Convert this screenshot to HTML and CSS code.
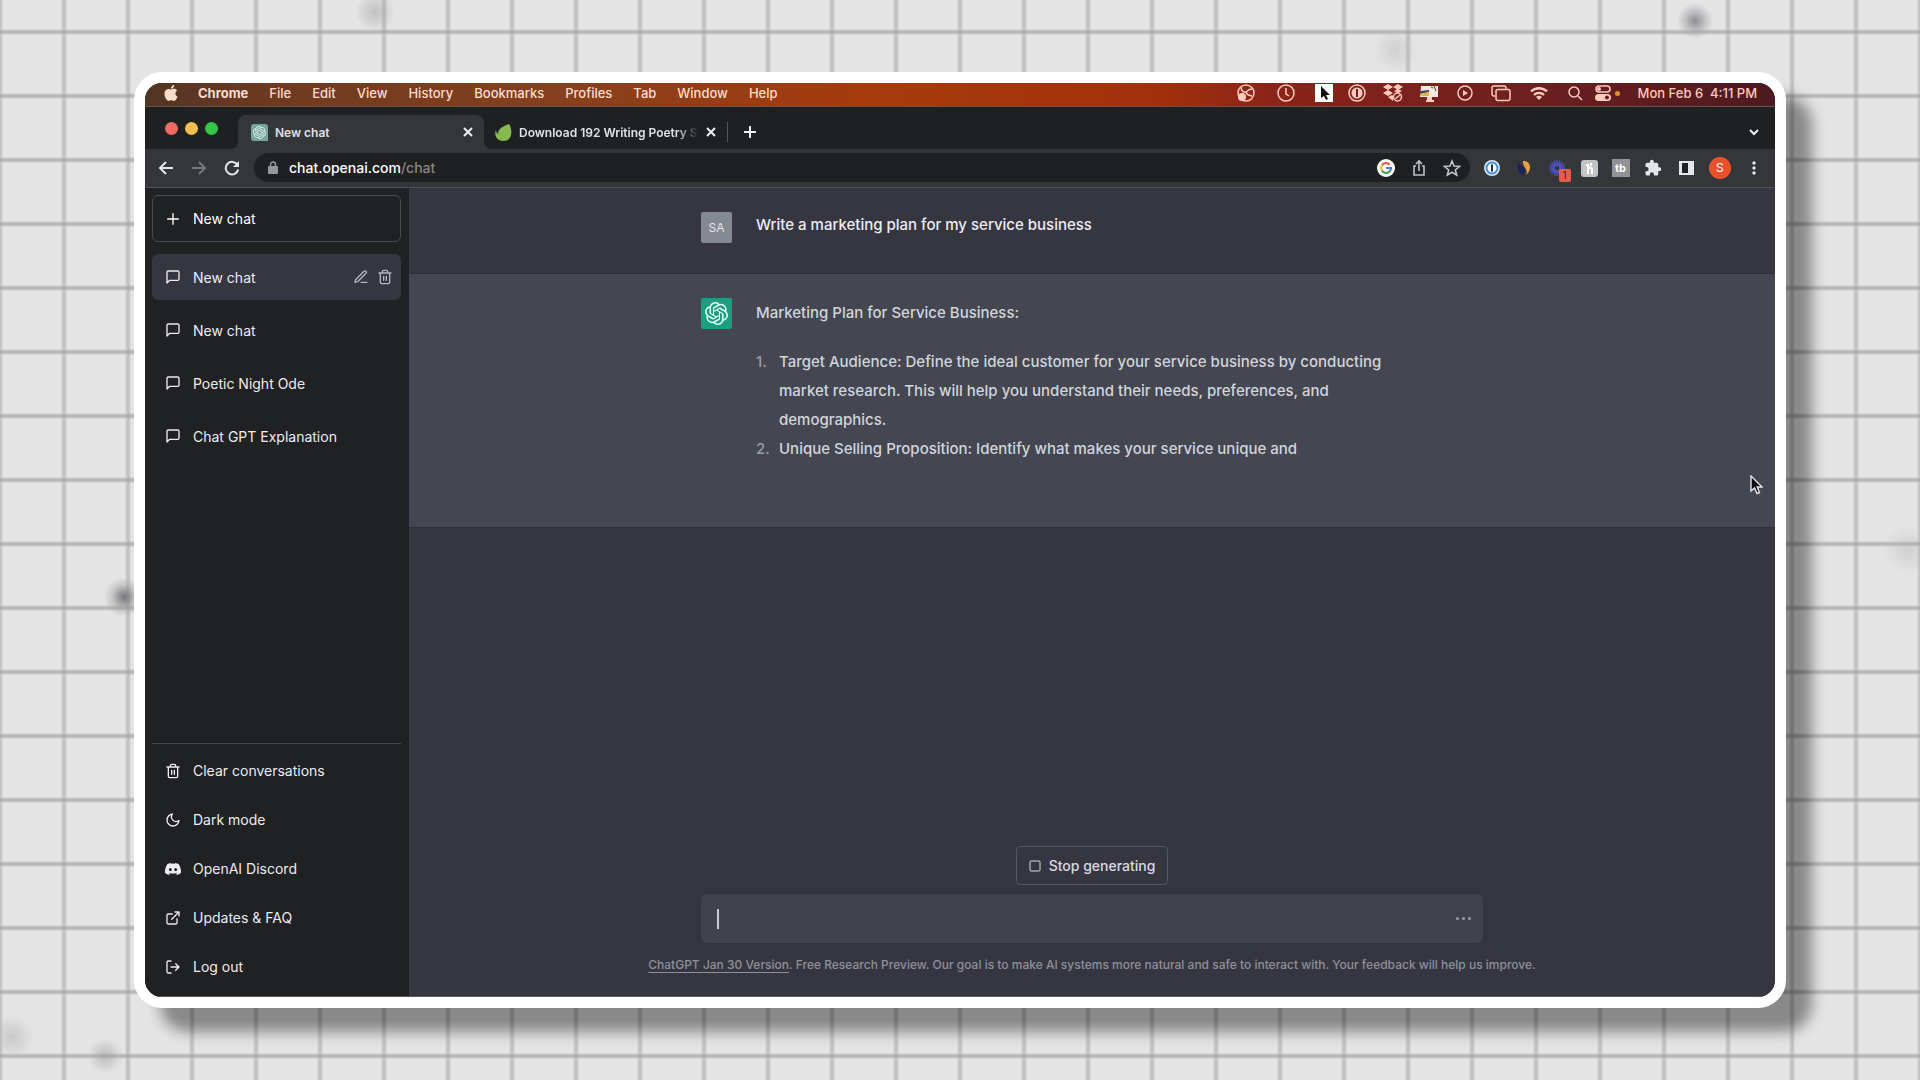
FILE: index.html
```html
<!DOCTYPE html>
<html lang="en">
<head>
    <meta charset="UTF-8">
    <meta name="viewport" content="width=device-width, initial-scale=1.0">
    <title>New chat</title>
    <link rel="stylesheet" href="styles.css">
</head>
<body>
    <!-- shared icons -->
    <svg class="sprite" aria-hidden="true">
        <symbol id="chat" viewBox="0 0 24 24"><path d="M21 15a2 2 0 0 1-2 2H7l-4 4V5a2 2 0 0 1 2-2h14a2 2 0 0 1 2 2z"/></symbol>
        <symbol id="trash" viewBox="0 0 24 24"><path d="M3 6h18M19 6v14a2 2 0 0 1-2 2H7a2 2 0 0 1-2-2V6m3 0V4a2 2 0 0 1 2-2h4a2 2 0 0 1 2 2v2M10 11v6M14 11v6"/></symbol>
        <symbol id="openai" viewBox="0 0 24 24"><path d="M22.2819 9.8211a5.9847 5.9847 0 0 0-.5157-4.9108 6.0462 6.0462 0 0 0-6.5098-2.9A6.0651 6.0651 0 0 0 4.9807 4.1818a5.9847 5.9847 0 0 0-3.9977 2.9 6.0462 6.0462 0 0 0 .7427 7.0966 5.98 5.98 0 0 0 .511 4.9107 6.051 6.051 0 0 0 6.5146 2.9001A5.9847 5.9847 0 0 0 13.2599 24a6.0557 6.0557 0 0 0 5.7718-4.2058 5.9894 5.9894 0 0 0 3.9977-2.9001 6.0557 6.0557 0 0 0-.7475-7.0729zm-9.022 12.6081a4.4755 4.4755 0 0 1-2.8764-1.0408l.1419-.0804 4.7783-2.7582a.7948.7948 0 0 0 .3927-.6813v-6.7369l2.02 1.1686a.071.071 0 0 1 .038.052v5.5826a4.504 4.504 0 0 1-4.4945 4.4944zm-9.6607-4.1254a4.4708 4.4708 0 0 1-.5346-3.0137l.142.0852 4.783 2.7582a.7712.7712 0 0 0 .7806 0l5.8428-3.3685v2.3324a.0804.0804 0 0 1-.0332.0615L9.74 19.9502a4.4992 4.4992 0 0 1-6.1408-1.6464zM2.3408 7.8956a4.485 4.485 0 0 1 2.3655-1.9728V11.6a.7664.7664 0 0 0 .3879.6765l5.8144 3.3543-2.0201 1.1685a.0757.0757 0 0 1-.071 0l-4.8303-2.7865A4.504 4.504 0 0 1 2.3408 7.872zm16.5963 3.8558L13.1038 8.364 15.1192 7.2a.0757.0757 0 0 1 .071 0l4.8303 2.7913a4.4944 4.4944 0 0 1-.6765 8.1042v-5.6772a.79.79 0 0 0-.407-.667zm2.0107-3.0231l-.142-.0852-4.7735-2.7818a.7759.7759 0 0 0-.7854 0L9.409 9.2297V6.8974a.0662.0662 0 0 1 .0284-.0615l4.8303-2.7866a4.4992 4.4992 0 0 1 6.6802 4.66zM8.3065 12.863l-2.02-1.1638a.0804.0804 0 0 1-.038-.0567V6.0742a4.4992 4.4992 0 0 1 7.3757-3.4537l-.142.0805L8.704 5.459a.7948.7948 0 0 0-.3927.6813zm1.0976-2.3654l2.602-1.4998 2.6069 1.4998v2.9994l-2.5974 1.4997-2.6067-1.4997Z"/></symbol>
    </svg>

    <div class="screen">
        <header class="menubar">
            <svg class="apple" viewBox="0 0 24 24"><path d="M12.152 6.896c-.948 0-2.415-1.078-3.96-1.04-2.04.027-3.91 1.183-4.961 3.014-2.117 3.675-.546 9.103 1.519 12.09 1.013 1.454 2.208 3.09 3.792 3.039 1.52-.065 2.09-.987 3.935-.987 1.831 0 2.35.987 3.96.948 1.637-.026 2.676-1.48 3.676-2.948 1.156-1.688 1.636-3.325 1.662-3.415-.039-.013-3.182-1.221-3.22-4.857-.026-3.04 2.48-4.494 2.597-4.559-1.429-2.09-3.623-2.324-4.39-2.376-2-.156-3.675 1.09-4.61 1.09zM15.53 3.83c.843-1.012 1.4-2.427 1.245-3.83-1.207.052-2.662.805-3.532 1.818-.78.896-1.454 2.338-1.273 3.714 1.338.104 2.715-.688 3.559-1.701"/></svg>
            <nav class="menus">
                <button class="app-name">Chrome</button>
                <button>File</button>
                <button>Edit</button>
                <button>View</button>
                <button>History</button>
                <button>Bookmarks</button>
                <button>Profiles</button>
                <button>Tab</button>
                <button>Window</button>
                <button>Help</button>
            </nav>
            <div class="status">
                <svg class="loose" viewBox="0 0 20 20"><circle cx="10" cy="10" r="8" class="line"/><path class="line" d="M5 4c0 4 3 6 5 5 2-1 2-3 6-3M10 9c1 4 4 3 6 4"/><circle cx="6" cy="14" r="4"/></svg>
                <svg class="wide" viewBox="0 0 20 20"><circle cx="10" cy="10" r="8" class="line"/><path class="line" d="M10 5v6l3 2"/></svg>
                <svg class="tight" viewBox="0 0 20 20"><path fill="#fff" d="M1 1h18v18H1z"/><path fill="#111" d="M7 3v12l3-2 2 4 2-1-2-4h4z"/></svg>
                <svg viewBox="0 0 20 20"><circle cx="10" cy="10" r="8" class="line"/><circle cx="10" cy="10" r="5.500"/><path fill="#7b221c" d="M9 6h2v8H9z"/></svg>
                <svg viewBox="0 0 20 20"><path d="M5 1l5 3-5 3-5-3zM15 1l5 3-5 3-5-3zM5 7l5 3-5 3-5-3zM15 6l4 2-4 2-4-2zM5 14l4-2 1 1v5z"/><circle cx="14.500" cy="14" r="4" class="line"/><path class="line" d="M12 16l5-4"/></svg>
                <svg viewBox="0 0 20 20"><path fill="#f6e7dc" d="M2 3h17v11H1z"/><path fill="#3a4a63" d="M1 8l9-1v2l-9 2z"/><path fill="#e3b64a" d="M1 11l9-2v4H1z"/><path d="M8 14h5v3h2v2H7v-2h1z"/><path stroke="#4a2b2b" d="M15 3l2 5M12 4l2 1"/></svg>
                <svg viewBox="0 0 20 20"><circle cx="10" cy="10" r="7" class="line"/><path d="M8 7l5 3-5 3z"/></svg>
                <svg class="wide" viewBox="0 0 20 20"><path class="line" d="M4 13H3a2 2 0 0 1-2-2V5a2 2 0 0 1 2-2h10a2 2 0 0 1 2 2v1"/><rect x="5" y="6.500" width="14" height="11" rx="2" class="line"/></svg>
                <svg viewBox="0 0 20 20"><path class="wave" d="M2 8.500a11.500 11.500 0 0 1 16 0M5 12a7 7 0 0 1 10 0"/><path d="M10 17l-3-3a4 4 0 0 1 6 0z"/></svg>
                <svg class="search" viewBox="0 0 20 20"><circle cx="9" cy="9" r="5" class="line"/><path class="line" d="M13 13l4 4"/></svg>
                <svg class="control" viewBox="0 0 20 20"><rect x="3" y="3" width="14" height="6" rx="3" class="line"/><circle cx="6" cy="6" r="2"/><rect x="2" y="11" width="16" height="7" rx="3.500"/><circle cx="14" cy="14.500" r="2" fill="#5f1d22"/></svg>
                <span class="dot"></span>
                <time>Mon Feb 6&nbsp; 4:11 PM</time>
            </div>
        </header>

        <div class="browser">
            <div class="tabstrip">
                <div class="lights"><span class="red"></span><span class="yellow"></span><span class="green"></span></div>
                <div class="tab active">
                    <svg class="favicon gpt" viewBox="0 0 17 17"><path fill="#74a69c" d="M3 0h11a3 3 0 0 1 3 3v14H3a3 3 0 0 1-3-3V3a3 3 0 0 1 3-3z"/><use href="#openai" x="2" y="2" width="13" height="13"/></svg>
                    <span class="tab-title">New chat</span>
                    <button class="close" aria-label="Close tab"><svg viewBox="0 0 10 10"><path d="M1 1l8 8M9 1l-8 8"/></svg></button>
                </div>
                <div class="tab">
                    <svg class="favicon" viewBox="0 0 17 17"><path fill="#87b94f" d="M14 0c3 4 5 17-6 17C1 17-1 10 1 6c0 2 1 3 2 4C3 4 9 2 14 0z"/></svg>
                    <span class="tab-title faded">Download 192 Writing Poetry S</span>
                    <button class="close" aria-label="Close tab"><svg viewBox="0 0 10 10"><path d="M1 1l8 8M9 1l-8 8"/></svg></button>
                </div>
                <button class="new-tab" aria-label="New tab"><svg viewBox="0 0 12 12"><path d="M6 0v12M0 6h12"/></svg></button>
                <button class="tab-search" aria-label="Search tabs"><svg viewBox="0 0 12 12"><path d="M2 4l4 4 4-4"/></svg></button>
            </div>

            <div class="toolbar">
                <div class="nav">
                    <button aria-label="Back"><svg viewBox="0 0 16 16"><path d="M15 8H2M8 2L2 8l6 6"/></svg></button>
                    <button class="off" aria-label="Forward"><svg viewBox="0 0 16 16"><path d="M1 8h13M8 2l6 6-6 6"/></svg></button>
                    <button aria-label="Reload"><svg viewBox="0 0 16 16"><path d="M13.500 5A6.300 6.300 0 1 0 14.200 9.500"/><path class="solid" d="M15 1v6H9z"/></svg></button>
                </div>
                <div class="omnibox">
                    <svg class="lock" viewBox="0 0 10 13"><rect y="5" width="10" height="8" rx="1"/><path class="shackle" d="M2.500 6V3.500a2.500 2.500 0 0 1 5 0V6"/></svg>
                    <a class="url" href="#">chat.openai.com<span>/chat</span></a>
                    <div class="omni-actions">
                        <svg viewBox="0 0 18 18"><circle cx="9" cy="9" r="9" fill="#fff"/><g fill="none" stroke-width="2.200"><path stroke="#e35b4d" d="M4.800 6.500A5 5 0 0 1 12.600 5.600"/><path stroke="#f1bd42" d="M4.800 11.500a5 5 0 0 1 0-5"/><path stroke="#4aa35a" d="M12.500 12.600a5 5 0 0 1-7.700-1.100"/><path stroke="#4b7fe0" d="M9 9h5a5 5 0 0 1-1.500 3.600"/></g></svg>
                        <svg class="outline" viewBox="0 0 18 18"><path d="M6 7H4v9h10V7h-2M9 12V2M6 5l3-3 3 3"/></svg>
                        <svg class="outline" viewBox="0 0 18 18"><path d="M9 2l2 5 5.500.500-4.200 3.500L13.700 16 9 13.200 4.300 16l1.400-5L1.500 7.500 7 7z"/></svg>
                    </div>
                </div>
                <div class="extensions">
                    <svg viewBox="0 0 18 18"><circle cx="9" cy="9" r="8" fill="#d9e8f5"/><circle cx="9" cy="9" r="5.500" fill="#f3f8fc" stroke="#4a8ec8" stroke-width="2"/><path fill="#14304b" d="M8 5.500h2v7H8z"/></svg>
                    <svg viewBox="0 0 18 18"><path fill="#1f2450" d="M4 3c0 4 6 4 6 8 0 2-1 4-2 5-5-1-7-8-4-13z"/><path fill="#e8a33a" d="M8 2c7-1 10 8 3 14 3-6-4-8-3-14z"/></svg>
                    <div class="ext-badged">
                        <svg viewBox="0 0 18 18"><path stroke="#5350c4" stroke-width="1.500" d="M9 1v6M9 11v6M1 9h6M11 9h6M3.300 3.300l4.200 4.200M10.500 10.500l4.200 4.200M14.700 3.300l-4.200 4.200M7.500 10.500l-4.200 4.200M6 1.600l2 5M10 11.500l2 5M12 1.600l-2 5M8 11.500l-2 5M1.600 6l5 2M11.500 10l5 2M16.400 6l-5 2M6.500 10l-5 2"/></svg>
                        <span class="badge">1</span>
                    </div>
                    <svg viewBox="0 0 18 18"><rect x="1" y="1" width="17" height="17" rx="3" fill="#c3c4c6"/><path fill="none" stroke="#fff" stroke-width="2" d="M6 6h2v9M8 11c0-3 4-3 4 0v4M11 4v3"/></svg>
                    <svg viewBox="0 0 18 18"><path fill="#909295" d="M0 0h18v18H0z"/><text x="3" y="13" class="tb">tb</text></svg>
                    <svg viewBox="0 0 24 24"><path fill="#e4e6ea" d="M20.500 11H19V7a2 2 0 0 0-2-2h-4V3.500a2.500 2.500 0 0 0-5 0V5H4a2 2 0 0 0-2 2v3.800h1.500a2.700 2.700 0 0 1 0 5.400H2V20a2 2 0 0 0 2 2h3.800v-1.500a2.700 2.700 0 0 1 5.400 0V22H17a2 2 0 0 0 2-2v-4h1.500a2.500 2.500 0 0 0 0-5z"/></svg>
                    <svg viewBox="0 0 18 18"><path fill="#e4e6ea" d="M2 2h15v14H2z"/><path fill="#202124" d="M5 4h6v10H5z"/></svg>
                    <button class="profile">S</button>
                    <svg viewBox="0 0 18 18"><g fill="#e4e6ea"><circle cx="9" cy="4" r="1.700"/><circle cx="9" cy="9" r="1.700"/><circle cx="9" cy="14" r="1.700"/></g></svg>
                </div>
            </div>

            <div class="page">
                <aside class="sidebar">
                    <button class="new-chat"><svg viewBox="0 0 24 24"><path d="M12 4v16M4 12h16"/></svg>New chat</button>
                    <nav class="history">
                        <div class="row current">
                            <a href="#"><svg><use href="#chat"/></svg>New chat</a>
                            <button aria-label="Rename"><svg viewBox="0 0 24 24"><path d="M12 20h9M16.500 3.500a2.100 2.100 0 0 1 3 3L7 19l-4 1 1-4z"/></svg></button>
                            <button aria-label="Delete"><svg><use href="#trash"/></svg></button>
                        </div>
                        <div class="row"><a href="#"><svg><use href="#chat"/></svg>New chat</a></div>
                        <div class="row"><a href="#"><svg><use href="#chat"/></svg>Poetic Night Ode</a></div>
                        <div class="row"><a href="#"><svg><use href="#chat"/></svg>Chat GPT Explanation</a></div>
                    </nav>
                    <nav class="links">
                        <a href="#"><svg><use href="#trash"/></svg>Clear conversations</a>
                        <a href="#"><svg viewBox="0 0 24 24"><path d="M21 12.800A9 9 0 1 1 11.200 3a7 7 0 0 0 9.800 9.800z"/></svg>Dark mode</a>
                        <a href="#"><svg class="discord" viewBox="0 0 24 24"><path d="M20.317 4.370a19.800 19.800 0 0 0-4.885-1.515l-.687 1.287a18.300 18.300 0 0 0-5.487 0L8.562 2.855a19.700 19.700 0 0 0-4.885 1.515C.533 9.046-.319 13.580.099 18.058c2.053 1.508 4.041 2.423 6.024 3.086l1.310-2.022-1.914-.998.442-.547c3.928 1.793 8.180 1.793 12.061 0l.449.547-1.914.998 1.309 2.022c1.961-.607 3.950-1.522 6.034-3.086.500-5.177-.838-9.674-3.583-13.688zM8.020 15.331c-1.183 0-2.157-1.086-2.157-2.419s.956-2.419 2.157-2.419c1.211 0 2.176 1.095 2.157 2.419 0 1.333-.956 2.419-2.157 2.419zm7.975 0c-1.183 0-2.157-1.086-2.157-2.419s.955-2.419 2.157-2.419c1.211 0 2.176 1.095 2.157 2.419 0 1.333-.946 2.419-2.157 2.419z"/></svg>OpenAI Discord</a>
                        <a href="#"><svg viewBox="0 0 24 24"><path d="M18 13v6a2 2 0 0 1-2 2H5a2 2 0 0 1-2-2V8a2 2 0 0 1 2-2h6M15 3h6v6M10 14L21 3"/></svg>Updates &amp; FAQ</a>
                        <a href="#"><svg viewBox="0 0 24 24"><path d="M9 21H5a2 2 0 0 1-2-2V5a2 2 0 0 1 2-2h4M16 17l5-5-5-5M21 12H9"/></svg>Log out</a>
                    </nav>
                </aside>

                <main class="chat">
                    <section class="message user">
                        <div class="inner">
                            <div class="avatar">SA</div>
                            <div class="text"><p>Write a marketing plan for my service business</p></div>
                        </div>
                    </section>
                    <section class="message assistant">
                        <div class="inner">
                            <div class="avatar bot"><svg><use href="#openai"/></svg></div>
                            <div class="text">
                                <p>Marketing Plan for Service Business:</p>
                                <ol>
                                    <li>Target Audience: Define the ideal customer for your service business by conducting market research. This will help you understand their needs, preferences, and demographics.</li>
                                    <li>Unique Selling Proposition: Identify what makes your service unique and</li>
                                </ol>
                            </div>
                        </div>
                    </section>
                    <footer class="composer">
                        <button class="stop"><svg viewBox="0 0 12 12"><rect x="1" y="1" width="10" height="10" rx="1"/></svg>Stop generating</button>
                        <form class="prompt">
                            <span class="caret"></span>
                            <input type="text" aria-label="Message">
                            <span class="dots"><i></i><i></i><i></i></span>
                        </form>
                        <p class="note"><a href="#">ChatGPT Jan 30 Version</a>. Free Research Preview. Our goal is to make AI systems more natural and safe to interact with. Your feedback will help us improve.</p>
                    </footer>
                    <svg class="pointer" viewBox="0 0 13 20"><path d="M1 1v15l3.500-3 2.500 5.500 2.500-1L7.200 12H12z"/></svg>
                </main>
            </div>
        </div>
    </div>
</body>
</html>
```
FILE: styles.css
```css
* {
    box-sizing: border-box;
}
body {
    margin: 0;
    min-height: 100vh;
    padding: 72px 134px;
    font-family: Inter, "Liberation Sans", sans-serif;
    font-size: 14px;
    background-color: #e4e4e4;
    /* ink blots over a 64px paper grid */
    background-image:
        radial-gradient(circle at 1695px 21px, #8d8d94 0, #a5a5aa88 10px, transparent 18px),
        radial-gradient(circle at 124px 597px, #77777c 0, #99999966 12px, transparent 20px),
        radial-gradient(circle at 375px 12px, #9997 0, transparent 20px),
        radial-gradient(circle at 105px 1056px, #9998 0, transparent 18px),
        radial-gradient(circle at 12px 1037px, #aaa7 0, transparent 22px),
        radial-gradient(circle at 1908px 550px, #aaa5 0, transparent 24px),
        radial-gradient(circle at 1395px 50px, #aaa5 0, transparent 22px),
        linear-gradient(90deg, transparent 29px, #9997 31px, #9997 33px, transparent 35px),
        linear-gradient(transparent 29px, #8887 31px, #8887 33px, transparent 35px);
    background-position: 0 0, 0 0, 0 0, 0 0, 0 0, 0 0, 0 0, 32px 0, 0 0;
    background-size: auto, auto, auto, auto, auto, auto, auto, 64px 64px, 64px 64px;
}
button {
    display: flex;
    align-items: center;
    padding: 0;
    border: 0;
    background: none;
    color: inherit;
    font: inherit;
}
a {
    color: inherit;
    text-decoration: none;
}
p {
    margin: 0;
}
svg {
    display: block;
    flex: none;
}
.sprite {
    position: absolute;
    width: 0;
    height: 0;
}
.screen {
    display: flex;
    flex-direction: column;
    min-height: calc(100vh - 144px);
    border: 11px solid #fff;
    border-radius: 28px;
    background: #1f2022;
    overflow: hidden;
    box-shadow: 26px 24px 14px rgba(0, 0, 0, 0.4);
}

/* mac menu bar */
.menubar {
    display: flex;
    align-items: center;
    height: 24px;
    padding: 0 18px 3px;
    color: #fbdcc8;
    font-size: 13px;
    font-weight: 500;
    border-bottom: 1px solid #6b5248;
    background: linear-gradient(90deg, #513425, #6f3a20 8%, #84401e 25%, #a83a0c 45%, #a3300b 62%, #8a2418 69%, #70201f 83%, #4c1a21);
}
.apple {
    width: 16px;
    height: 16px;
    margin-right: 19px;
    fill: currentColor;
}
.menus {
    display: flex;
    gap: 21px;
}
.app-name {
    font-weight: 700;
}
.status {
    display: flex;
    align-items: center;
    margin-left: auto;
    color: #ffc9bd;
}
.status svg {
    width: 20px;
    height: 20px;
    margin-right: 16px;
    fill: currentColor;
}
.status .loose {
    margin-right: 20px;
}
.status .wide {
    margin-right: 18px;
}
.status .tight {
    margin-right: 13px;
}
.status .search {
    margin-right: 8px;
}
.status .control {
    margin-right: 2px;
}
.status .line, .status .wave {
    fill: none;
    stroke: currentColor;
    stroke-width: 1.5;
}
.status .wave {
    stroke-width: 2.4;
}
.dot {
    width: 5px;
    height: 5px;
    margin-right: 18px;
    border-radius: 50%;
    background: #e09035;
}

/* browser chrome */
.browser {
    display: flex;
    flex-direction: column;
    flex: 1;
    border-bottom: 1px solid #5b5c60;
}
.tabstrip {
    display: flex;
    align-items: center;
    height: 42px;
    padding: 8px 15px 0 20px;
    color: #dfe1e5;
    font-size: 12px;
    font-weight: 600;
}
.lights {
    display: flex;
    gap: 7px;
    margin: 0 20px 8px 0;
}
.lights span {
    width: 13px;
    height: 13px;
    border-radius: 50%;
}
.lights .red {
    background: #ee6a63;
}
.lights .yellow {
    background: #f4bd4f;
}
.lights .green {
    background: #35c649;
}
.tab {
    display: flex;
    align-items: center;
    width: 243px;
    height: 34px;
    padding: 0 11px;
}
.tab.active {
    position: relative;
    width: 246px;
    padding: 0 11px 0 13px;
    border-radius: 8px 8px 0 0;
    background: #35363a;
}
/* flared feet of the open tab */
.tab.active::before, .tab.active::after {
    content: "";
    position: absolute;
    bottom: 0;
    left: -8px;
    width: 8px;
    height: 8px;
    background: radial-gradient(circle at 0 0, transparent 8px, #35363a 8px);
}
.tab.active::after {
    left: 100%;
    background: radial-gradient(circle at 100% 0, transparent 8px, #35363a 8px);
}
.favicon {
    width: 17px;
    height: 17px;
    margin-right: 7px;
}
.favicon.gpt {
    fill: #e2f0ec;
}
.tab-title {
    flex: 1;
    white-space: nowrap;
}
.faded {
    -webkit-mask-image: linear-gradient(90deg, #000 88%, transparent);
    mask-image: linear-gradient(90deg, #000 88%, transparent);
}
.close svg, .new-tab svg, .tab-search svg {
    width: 10px;
    height: 10px;
    fill: none;
    stroke: #eceef0;
    stroke-width: 2;
}
.close {
    margin-left: 8px;
}
.new-tab {
    height: 20px;
    padding-left: 16px;
    border-left: 1px solid #55565a;
}
.new-tab svg, .tab-search svg {
    width: 12px;
    height: 12px;
}
.tab-search {
    margin-left: auto;
}
.toolbar {
    display: flex;
    align-items: center;
    height: 39px;
    padding: 0 12px 1px 13px;
    border-bottom: 1px solid #505155;
    background: #35363a;
    color: #e4e6ea;
}
.nav {
    display: flex;
    gap: 17px;
    margin-right: 14px;
}
.nav svg {
    width: 16px;
    height: 16px;
    fill: none;
    stroke: currentColor;
    stroke-width: 2;
}
.nav .off {
    color: #77797d;
}
.nav .solid {
    fill: currentColor;
    stroke: none;
}
.omnibox {
    display: flex;
    align-items: center;
    flex: 1;
    height: 29px;
    margin-right: 13px;
    padding: 0 9px 0 14px;
    border-radius: 15px;
    background: #1f2022;
    font-weight: 500;
}
.lock {
    width: 10px;
    height: 13px;
    margin-right: 11px;
    fill: #96989c;
}
.shackle {
    fill: none;
    stroke: #96989c;
    stroke-width: 1.5;
}
.url {
    color: #fff;
}
.url span {
    color: #85878b;
}
.omni-actions {
    display: flex;
    gap: 15px;
    margin-left: auto;
}
.omni-actions svg, .extensions svg {
    width: 18px;
    height: 18px;
}
.outline {
    fill: none;
    stroke: #bfc1c5;
    stroke-width: 1.6;
}
.extensions {
    display: flex;
    align-items: center;
    justify-content: space-between;
    width: 280px;
}
.ext-badged {
    position: relative;
}
.badge {
    position: absolute;
    left: 11px;
    top: 10px;
    width: 12px;
    height: 13px;
    border-radius: 2px;
    background: #e85c4c;
    color: #4a1512;
    font-size: 10px;
    line-height: 13px;
    text-align: center;
}
.tb {
    fill: #fff;
    font-size: 11px;
    font-weight: 700;
}
.profile {
    justify-content: center;
    width: 22px;
    height: 22px;
    border-radius: 50%;
    background: #e8512a;
    color: #fff;
    font-size: 12px;
}

/* page */
.page {
    display: flex;
    flex: 1;
}
.sidebar {
    display: flex;
    flex-direction: column;
    width: 264px;
    padding: 7px 8px 5px 7px;
    background: #202123;
    color: #ececf1;
}
.sidebar svg {
    width: 16px;
    height: 16px;
    fill: none;
    stroke: currentColor;
    stroke-width: 2;
    stroke-linecap: round;
    stroke-linejoin: round;
}
.new-chat {
    gap: 12px;
    height: 47px;
    padding: 0 12px;
    border: 1px solid #4a4b50;
    border-radius: 6px;
    color: #fff;
}
.history {
    display: flex;
    flex-direction: column;
    gap: 7px;
    margin-top: 12px;
}
.row {
    display: flex;
    align-items: center;
    gap: 8px;
    height: 46px;
    padding: 0 8px 0 13px;
    border-radius: 6px;
}
.row a {
    display: flex;
    align-items: center;
    gap: 12px;
    flex: 1;
}
.row button {
    color: #b4b5c0;
}
.current {
    background: #363641;
}
.links {
    margin-top: auto;
    padding-top: 2px;
    border-top: 1px solid #47484c;
}
.links a {
    display: flex;
    align-items: center;
    gap: 12px;
    height: 49px;
    padding: 0 13px;
}
.sidebar .discord {
    fill: currentColor;
    stroke: none;
}
.chat {
    position: relative;
    display: flex;
    flex-direction: column;
    flex: 1;
    background: #363641;
}
.message {
    padding: 24px 24px 0;
    border-bottom: 1px solid #2d2e38;
    font-size: 15px;
    font-weight: 500;
}
.inner {
    display: flex;
    gap: 24px;
    max-width: 782px;
    margin: 0 auto;
}
.user {
    min-height: 86px;
    color: #ececf1;
    line-height: 25px;
}
.assistant {
    padding-bottom: 64px;
    background: #444651;
    color: #d1d5db;
    line-height: 29px;
}
.avatar {
    display: flex;
    align-items: center;
    justify-content: center;
    width: 31px;
    height: 31px;
    border-radius: 2px;
    background: #848a94;
    color: #e4e6ea;
    font-size: 12px;
    font-weight: 400;
}
.avatar svg {
    width: 23px;
    height: 23px;
    fill: #e6fff7;
}
.bot {
    background: #1a9f80;
}
.text {
    flex: 1;
    max-width: 660px;
}
.text ol {
    margin: 20px 0 0;
    padding: 0;
    list-style: none;
    counter-reset: step;
}
.text li {
    display: grid;
    grid-template-columns: 23px 1fr;
    counter-increment: step;
}
.text li::before {
    content: counter(step) ".";
    color: #9a9ca6;
}
.composer {
    display: flex;
    flex-direction: column;
    align-items: center;
    margin-top: auto;
    padding: 0 24px 21px;
}
.stop {
    gap: 8px;
    height: 39px;
    padding: 0 12px;
    border: 1px solid #555661;
    border-radius: 4px;
    color: #d9d9e3;
    font-weight: 500;
}
.stop svg {
    width: 12px;
    height: 12px;
    fill: none;
    stroke: currentColor;
}
.prompt {
    display: flex;
    align-items: center;
    width: 100%;
    max-width: 782px;
    height: 49px;
    margin: 9px 0 12px;
    padding: 0 12px 0 16px;
    border-radius: 6px;
    background: #40424e;
    box-shadow: 0 0 10px rgba(0, 0, 0, 0.08);
}
.prompt input {
    flex: 1;
    border: 0;
    outline: 0;
    background: none;
    color: #fff;
    font: inherit;
}
.caret {
    width: 2px;
    height: 20px;
    background: #c9cad6;
}
.dots {
    display: flex;
    gap: 3px;
}
.dots i {
    width: 3px;
    height: 3px;
    border-radius: 50%;
    background: #9b9ca8;
}
.note {
    color: #8f909a;
    font-size: 12px;
    font-weight: 500;
    line-height: 20px;
}
.note a {
    text-decoration: underline;
    text-underline-offset: 3px;
}
.pointer {
    position: absolute;
    right: 12px;
    top: 287px;
    width: 13px;
    height: 20px;
    fill: #0c0c10;
    stroke: #e5e5ef;
    stroke-width: 1.4;
}
```
